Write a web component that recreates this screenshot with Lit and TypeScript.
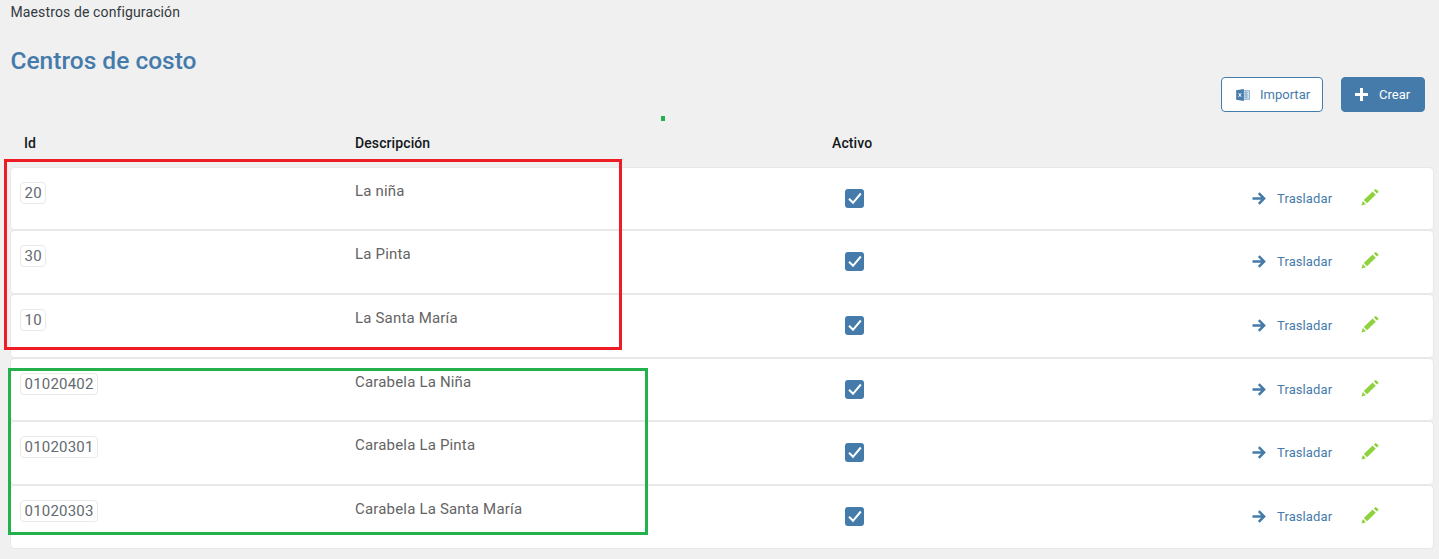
import { LitElement, html, css, svg } from "lit";
import { customElement } from "lit/decorators.js";

const rows = [
  ["20", "La niña"],
  ["30", "La Pinta"],
  ["10", "La Santa María"],
  ["01020402", "Carabela La Niña"],
  ["01020301", "Carabela La Pinta"],
  ["01020303", "Carabela La Santa María"],
];

const excel = svg`<svg class="xl" width="14" height="12" viewBox="0 0 16 14">
  <rect x="7" y="2" width="8.500" height="10" fill="#dbe7f1" stroke="#7fa6c8" stroke-width="1"/>
  <path d="M9 4.5h5M9 7h5M9 9.5h5M11.500 2.500v9" stroke="#7fa6c8" stroke-width="1" fill="none"/>
  <path d="M0 1.500 9 0v14L0 12.500z" fill="#4a7dab"/>
  <path d="M2.800 4.800 6 9.200M6 4.800 2.800 9.200" stroke="#fff" stroke-width="1.100" fill="none"/>
</svg>`;

const plus = svg`<svg width="13" height="13" viewBox="0 0 13 13"><path d="M6.500 0v13M0 6.500h13" stroke="#fff" stroke-width="3" fill="none"/></svg>`;

const arrow = svg`<svg class="arrow" width="14" height="13" viewBox="0 0 14 13"><path d="M0.500 6.500h11.500M6.800 1.200l5.300 5.300-5.300 5.300" stroke="#457baa" stroke-width="2.500" fill="none"/></svg>`;

const pencil = svg`<svg class="pencil" width="18" height="17" viewBox="0 0 18 17">
  <path d="M0.500 16.500 1.800 12 5 15.200z" fill="#8ed33c"/>
  <path d="M2.800 11 11.600 2.600 14.800 5.800 6 14.200z" fill="#8ed33c"/>
  <path d="M12.800 1.500 14 .4a1 1 0 0 1 1.400 0l1.700 1.700a1 1 0 0 1 0 1.400L16 4.600z" fill="#8ed33c"/>
</svg>`;

const check = svg`<svg width="19" height="19" viewBox="0 0 19 19"><rect width="19" height="19" rx="3" fill="#457baa"/><path d="M4 9.800 8 13.800 15.800 4.500" stroke="#fff" stroke-width="2" fill="none"/></svg>`;

@customElement("app-root")
export class AppRoot extends LitElement {
  static styles = css`
    :host {
      display: block;
      position: relative;
      width: 1439px;
      height: 559px;
      overflow: hidden;
      background: #f0f0f0;
      font-family: Roboto, "Liberation Sans", sans-serif;
    }
    .crumb {
      padding: 4px 0 0 10.500px;
      font-size: 14px;
      line-height: 17px;
      letter-spacing: 0.120px;
      color: #33393f;
    }
    .title {
      margin: 24px 0 0 10.500px;
      font-size: 24.500px;
      line-height: 31px;
      font-weight: 500;
      color: #457baa;
    }
    .actions {
      display: flex;
      justify-content: flex-end;
      gap: 18px;
      margin-top: 1px;
      padding-right: 14px;
    }
    .btn {
      box-sizing: border-box;
      height: 35px;
      border: 1px solid #457baa;
      border-radius: 4px;
      display: flex;
      align-items: center;
      font-size: 13px;
      color: #457baa;
    }
    .import { width: 102px; background: #fff; padding-left: 14px; gap: 10px; }
    .create { width: 84px; background: #457baa; color: #fff; padding-left: 13px; gap: 11px; }
    .head {
      display: grid;
      grid-template-columns: 331px 477px 1fr;
      margin: 21px 6px 0 11px;
      padding-left: 13px;
      box-sizing: border-box;
      height: 20px;
      align-items: center;
      font-size: 14px;
      font-weight: 500;
      letter-spacing: 0.100px;
      color: #14181c;
    }
    .list {
      display: flex;
      flex-direction: column;
      gap: 2px;
      margin: 14.600px 6px 0 11px;
    }
    .row {
      box-sizing: border-box;
      height: 61.700px;
      background: #fff;
      border-radius: 4px;
      box-shadow: 0 0 0 1px #e8e8e8;
      display: grid;
      grid-template-columns: 344px 490px 1fr;
    }
    .id { padding: 14px 0 0 9px; }
    .chip {
      display: inline-block;
      box-sizing: border-box;
      height: 22px;
      padding: 0 3.500px;
      border: 1px solid #e9e9e9;
      border-radius: 4px;
      font-size: 15px;
      line-height: 21px;
      letter-spacing: 0.200px;
      color: #646a70;
    }
    .desc {
      padding-top: 14px;
      font-size: 15px;
      line-height: 18px;
      letter-spacing: 0.180px;
      color: #646464;
    }
    .rest {
      display: flex;
      align-items: center;
      padding-bottom: 0.800px;
    }
    .cb { display: flex; width: 407px; }
    .move {
      display: flex;
      align-items: center;
      gap: 11px;
      font-size: 13px;
      letter-spacing: 0.100px;
      color: #457baa;
      width: 109px;
    }
    .pencil { margin: -2px 0 0 0; }
    .box { position: absolute; box-sizing: border-box; border: 3px solid; }
    .red { left: 4px; top: 159px; width: 618px; height: 191px; border-color: #ee1c25; }
    .green { left: 8px; top: 368px; width: 640px; height: 167px; border-color: #22b14c; }
    .dot { position: absolute; left: 661px; top: 116px; width: 4px; height: 5px; background: #22b14c; }
  `;

  render() {
    return html`
      <div class="crumb">Maestros de configuración</div>
      <h1 class="title">Centros de costo</h1>
      <div class="actions">
        <div class="btn import">${excel}<span>Importar</span></div>
        <div class="btn create">${plus}<span>Crear</span></div>
      </div>
      <div class="head"><span>Id</span><span>Descripción</span><span>Activo</span></div>
      <div class="list">
        ${rows.map(
          ([id, d]) => html`<div class="row">
            <div class="id"><span class="chip">${id}</span></div>
            <div class="desc">${d}</div>
            <div class="rest">
              <div class="cb">${check}</div>
              <div class="move">${arrow}<span>Trasladar</span></div>
              ${pencil}
            </div>
          </div>`
        )}
      </div>
      <div class="box red"></div>
      <div class="box green"></div>
      <div class="dot"></div>
    `;
  }
}
